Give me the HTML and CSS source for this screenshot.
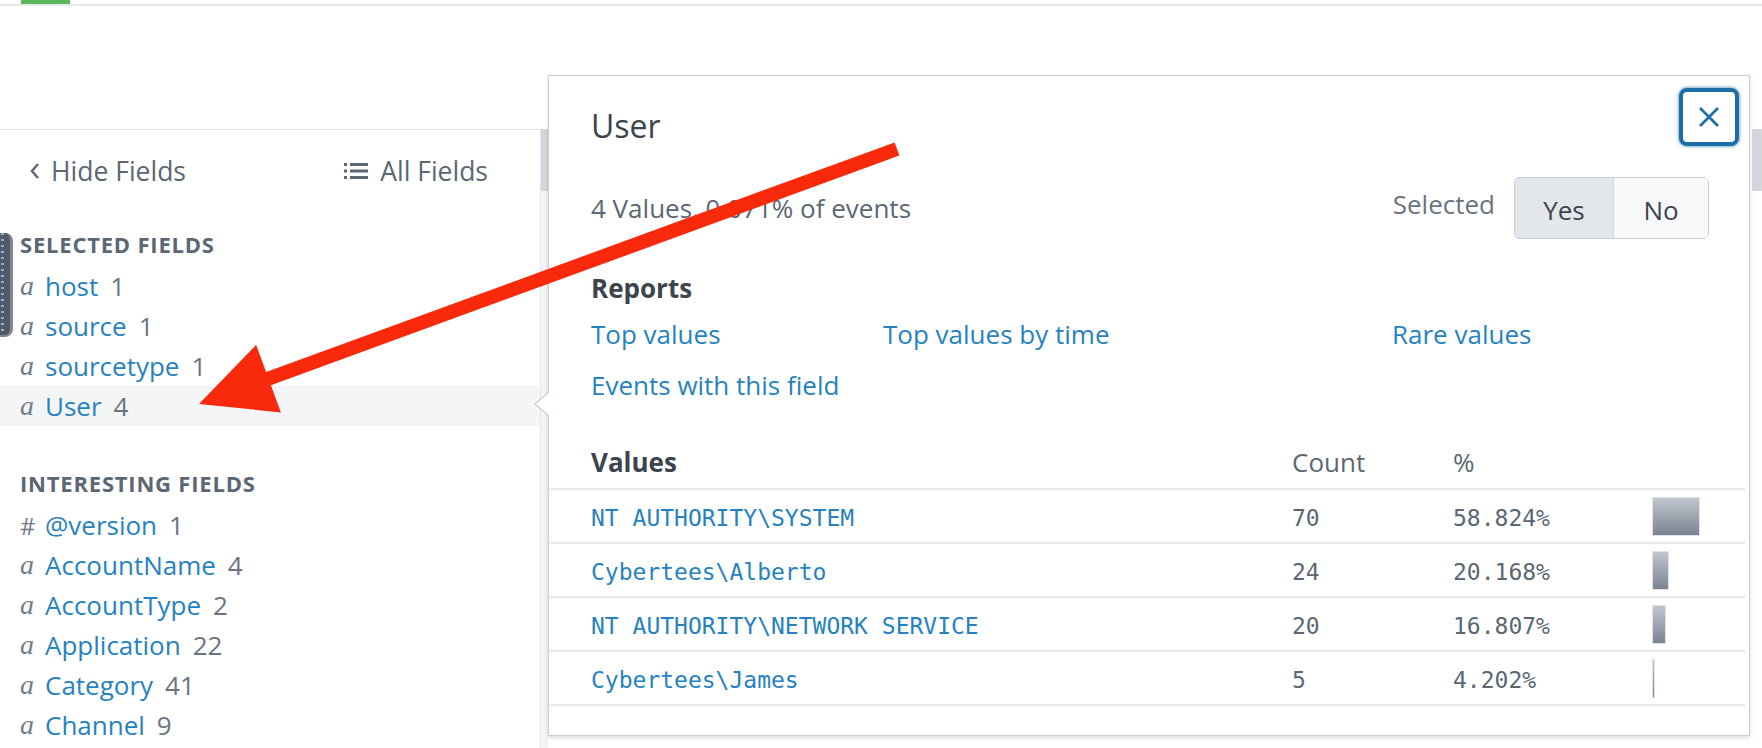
FILE: index.html
```html
<!DOCTYPE html>
<html>
<head>
<meta charset="utf-8">
<title>Fields</title>
<link rel="stylesheet" href="styles.css">
</head>
<body>
<div class="page">
  <div class="topbar"><span class="topbar-accent"></span></div>

  <div class="workspace">
    <aside class="sidebar">
      <div class="sidebar-body">
        <div class="sidebar-head">
          <a class="head-link"><svg class="chev" width="10" height="18" viewBox="0 0 10 18"><polyline points="8,2 2,9 8,16" fill="none" stroke="#5c6773" stroke-width="2.4"/></svg>Hide Fields</a>
          <a class="head-link"><svg class="list-icon" width="24" height="18" viewBox="0 0 24 18"><g fill="#5c6773"><rect x="0" y="1" width="3" height="3"/><rect x="0" y="7.5" width="3" height="3"/><rect x="0" y="14" width="3" height="3"/><rect x="6" y="1" width="18" height="3"/><rect x="6" y="7.5" width="18" height="3"/><rect x="6" y="14" width="18" height="3"/></g></svg>All Fields</a>
        </div>

        <div class="section">
          <div class="section-title">Selected Fields</div>
          <ul class="fields">
            <li class="field"><span class="type">a</span><span class="name">host</span><span class="count">1</span></li>
            <li class="field"><span class="type">a</span><span class="name">source</span><span class="count">1</span></li>
            <li class="field"><span class="type">a</span><span class="name">sourcetype</span><span class="count">1</span></li>
            <li class="field is-active"><span class="type">a</span><span class="name">User</span><span class="count">4</span></li>
          </ul>
        </div>

        <div class="section section-interesting">
          <div class="section-title">Interesting Fields</div>
          <ul class="fields">
            <li class="field"><span class="type type-num">#</span><span class="name">@version</span><span class="count">1</span></li>
            <li class="field"><span class="type">a</span><span class="name">AccountName</span><span class="count">4</span></li>
            <li class="field"><span class="type">a</span><span class="name">AccountType</span><span class="count">2</span></li>
            <li class="field"><span class="type">a</span><span class="name">Application</span><span class="count">22</span></li>
            <li class="field"><span class="type">a</span><span class="name">Category</span><span class="count">41</span></li>
            <li class="field"><span class="type">a</span><span class="name">Channel</span><span class="count">9</span></li>
          </ul>
        </div>
      </div>
      <div class="scrollbar"><div class="scroll-thumb"></div></div>
    </aside>

    <main class="content">
      <div class="content-body"></div>
      <div class="scrollbar scrollbar-wide"><div class="scroll-thumb"></div></div>
    </main>
  </div>

  <div class="drag-tab"></div>

  <section class="popover">
    <div class="pop-head">
      <h2 class="pop-title">User</h2>
      <button class="close-btn" aria-label="Close"><svg width="24" height="24" viewBox="0 0 24 24"><path d="M3 3 L21 21 M21 3 L3 21" stroke="#1d6ea5" stroke-width="2.6" fill="none"/></svg></button>
    </div>

    <div class="pop-meta">
      <div class="meta-text">4 Values, 0.071% of events</div>
      <div class="selected">
        <span class="selected-label">Selected</span>
        <div class="toggle">
          <span class="toggle-opt is-on">Yes</span>
          <span class="toggle-opt">No</span>
        </div>
      </div>
    </div>

    <div class="reports">
      <div class="reports-title">Reports</div>
      <div class="report-links">
        <a class="link">Top values</a>
        <a class="link">Top values by time</a>
        <a class="link">Rare values</a>
        <a class="link">Events with this field</a>
      </div>
    </div>

    <div class="values-table">
      <div class="vrow vhead">
        <div class="vcell vname">Values</div>
        <div class="vcell">Count</div>
        <div class="vcell">%</div>
        <div class="vcell"></div>
      </div>
      <div class="vrow">
        <div class="vcell vname mono link">NT AUTHORITY\SYSTEM</div>
        <div class="vcell mono">70</div>
        <div class="vcell mono">58.824%</div>
        <div class="vcell"><div class="bar" style="width:48px"></div></div>
      </div>
      <div class="vrow">
        <div class="vcell vname mono link">Cybertees\Alberto</div>
        <div class="vcell mono">24</div>
        <div class="vcell mono">20.168%</div>
        <div class="vcell"><div class="bar" style="width:16.5px"></div></div>
      </div>
      <div class="vrow">
        <div class="vcell vname mono link">NT AUTHORITY\NETWORK SERVICE</div>
        <div class="vcell mono">20</div>
        <div class="vcell mono">16.807%</div>
        <div class="vcell"><div class="bar" style="width:13.7px"></div></div>
      </div>
      <div class="vrow">
        <div class="vcell vname mono link">Cybertees\James</div>
        <div class="vcell mono">5</div>
        <div class="vcell mono">4.202%</div>
        <div class="vcell"><div class="bar" style="width:3.4px"></div></div>
      </div>
    </div>
  </section>

  <svg class="annotation" width="1762" height="748" viewBox="0 0 1762 748">
    <polygon points="894.6,142.4 899.4,155.6 270.9,385.2 280.9,412.4 199,404 256.1,344.8 266.1,372.0" fill="#f9290c"/>
  </svg>
</div>
</body>
</html>
```

FILE: styles.css
```css
* { box-sizing: border-box; }

html, body {
  margin: 0;
  padding: 0;
  background: #ffffff;
}

body {
  font-family: "Open Sans", "Noto Sans", "Liberation Sans", sans-serif;
  color: #5c6773;
}

.page {
  position: relative;
  width: 1762px;
  height: 748px;
  overflow: hidden;
  background: #ffffff;
}

/* top bar */
.topbar {
  height: 6px;
  border-bottom: 2px solid #e6e9ec;
  padding-left: 21px;
}
.topbar-accent {
  display: block;
  width: 49px;
  height: 4px;
  background: #5cb85c;
}

/* workspace */
.workspace {
  display: flex;
  margin-top: 123px;
  height: 619px;
}

.sidebar {
  width: 548px;
  display: flex;
  flex: none;
}
.sidebar-body {
  width: 541px;
  border-top: 1px solid #e1e4e8;
  border-right: 1px solid #e3e6ea;
}
.scrollbar {
  width: 7px;
  background: #f3f4f6;
}
.scrollbar-wide {
  width: 10px;
  background: #ffffff;
}
.scroll-thumb {
  height: 62px;
  background: #d3d7dc;
}

.content {
  flex: 1;
  display: flex;
}
.content-body {
  flex: 1;
}

.sidebar-head {
  height: 82px;
  display: flex;
  align-items: center;
  justify-content: space-between;
  padding: 0 52px 0 30px;
}
.head-link {
  display: flex;
  align-items: center;
  font-size: 26.5px;
  color: #5c6773;
}
.chev { margin-right: 11px; }
.list-icon { margin-right: 12px; }

.section {
  margin-top: 20px;
}
.section-interesting {
  margin-top: 45px;
}
.section-title {
  height: 24px;
  line-height: 24px;
  padding-left: 20px;
  font-size: 22px;
  font-weight: 700;
  text-transform: uppercase;
  color: #5c6773;
  letter-spacing: 0.8px;
}
.fields {
  list-style: none;
  margin: 10px 0 0;
  padding: 0;
}
.field {
  height: 40px;
  display: flex;
  align-items: center;
  padding-left: 20px;
  font-size: 26px;
}
.field.is-active {
  background: #f4f5f7;
}
.type {
  width: 25px;
  font-family: "Liberation Serif", "DejaVu Serif", serif;
  font-style: italic;
  font-size: 28px;
  color: #737d88;
}
.type-num {
  font-family: "Open Sans", "Liberation Sans", sans-serif;
  font-style: normal;
  font-size: 24px;
}
.name {
  color: #2782c0;
}
.count {
  margin-left: 12px;
  color: #6b7480;
}

/* drag tab */
.drag-tab {
  position: absolute;
  left: 0;
  top: 233px;
  width: 13px;
  height: 104px;
  background-color: #4f5b6d;
  background-image: repeating-linear-gradient(to bottom, #a3acb8 0 2px, transparent 2px 6px);
  background-size: 3px 100%;
  background-position: 1px 0;
  background-repeat: no-repeat;
  border-radius: 0 8px 8px 0;
  border-right: 3px solid #848689;
  border-bottom: 2px solid #848689;
}

/* popover */
.popover {
  position: absolute;
  left: 548px;
  top: 75px;
  width: 1202px;
  height: 661px;
  background: #ffffff;
  border: 1px solid #c9cfd6;
  box-shadow: 0 2px 4px rgba(0, 0, 0, 0.14);
}
.popover::before,
.popover::after {
  content: "";
  position: absolute;
  top: 316px;
  width: 0;
  height: 0;
  border-top: 12px solid transparent;
  border-bottom: 12px solid transparent;
}
.popover::before {
  left: -15px;
  border-right: 14px solid #c9cfd6;
}
.popover::after {
  left: -13px;
  border-right: 14px solid #ffffff;
}

.pop-head {
  display: flex;
  justify-content: space-between;
  align-items: flex-start;
  padding: 12px 10px 0 42px;
}
.pop-title {
  margin: 18px 0 0;
  font-size: 32px;
  line-height: 40px;
  font-weight: 400;
  color: #3c444d;
}
.close-btn {
  width: 60px;
  height: 58px;
  padding: 0;
  border: 4px solid #1d6ea5;
  border-radius: 8px;
  background: #ffffff;
  box-shadow: 0 0 3px 1px rgba(29, 110, 165, 0.55);
  display: flex;
  align-items: center;
  justify-content: center;
}

.pop-meta {
  margin-top: 31px;
  height: 62px;
  display: flex;
  align-items: center;
  justify-content: space-between;
  padding: 0 40px 0 42px;
}
.meta-text {
  font-size: 26px;
  color: #5c6773;
}
.selected {
  display: flex;
  align-items: center;
}
.selected-label {
  font-size: 26px;
  color: #6b7480;
  margin-right: 19px;
  margin-bottom: 8px;
}
.toggle {
  display: flex;
  height: 62px;
  border: 1px solid #c8ced5;
  border-radius: 5px;
  overflow: hidden;
}
.toggle-opt {
  display: flex;
  align-items: center;
  justify-content: center;
  font-size: 26px;
  color: #3c444d;
  background: #f7f8f9;
  width: 94px;
  padding-top: 4px;
}
.toggle-opt.is-on {
  width: 99px;
  background: #e3e7eb;
  border-right: 1px solid #cfd5db;
}

.reports {
  margin-top: 32px;
  padding: 0 42px;
}
.reports-title {
  font-size: 26px;
  line-height: 34px;
  font-weight: 700;
  color: #3c444d;
}
.report-links {
  margin-top: 9px;
  display: grid;
  grid-template-columns: 292px 509px auto;
  row-gap: 11px;
}
.link {
  font-size: 26px;
  line-height: 40px;
  color: #2782c0;
}

.values-table {
  margin-top: 31px;
  margin-right: 4px;
}
.vrow {
  display: grid;
  grid-template-columns: 743px 161px 199px 1fr;
  height: 54px;
  border-bottom: 2px solid #e6e9ed;
  align-items: center;
}
.vhead {
  font-size: 26px;
  color: #5c6773;
}
.vhead .vname {
  font-weight: 700;
  color: #3c444d;
}
.vcell.vname {
  padding-left: 42px;
}
.mono {
  font-family: "DejaVu Sans Mono", "Liberation Mono", monospace;
  font-size: 23px;
  color: #5c6773;
  padding-top: 3px;
}
.mono.link {
  line-height: normal;
  color: #2782c0;
}
.bar {
  height: 39px;
  background: linear-gradient(to bottom, #c0c6ce, #7a8491);
  border: 1px solid #dfe3e7;
}

/* annotation overlay */
.annotation {
  position: absolute;
  left: 0;
  top: 0;
  pointer-events: none;
}
```
